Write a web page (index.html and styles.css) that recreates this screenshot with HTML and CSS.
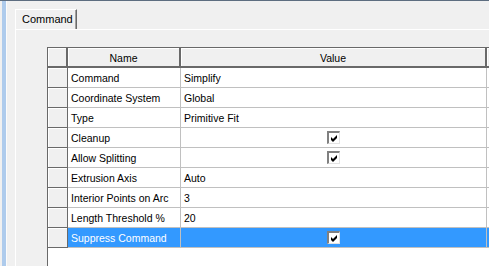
FILE: index.html
```html
<!DOCTYPE html>
<html lang="en">
<head>
    <meta charset="UTF-8">
    <meta name="viewport" content="width=device-width, initial-scale=1.0">
    <title>Command Properties</title>
    <link rel="stylesheet" href="styles.css">
</head>
<body>
    <div class="app">
        <div class="rail">
            <div class="rail-blue"></div>
        </div>
        <div class="tabctl">
            <div class="tabstrip">
                <div class="tab">Command</div>
            </div>
            <div class="panel">
                <table class="grid">
                    <colgroup>
                        <col class="c-head">
                        <col class="c-name">
                        <col class="c-value">
                        <col class="c-more">
                    </colgroup>
                    <thead>
                        <tr>
                            <th class="rh"></th>
                            <th>Name</th>
                            <th>Value</th>
                            <th class="more"></th>
                        </tr>
                    </thead>
                    <tbody>
                        <tr><td class="rh"></td><td>Command</td><td>Simplify</td><td></td></tr>
                        <tr><td class="rh"></td><td>Coordinate System</td><td>Global</td><td></td></tr>
                        <tr><td class="rh"></td><td>Type</td><td>Primitive Fit</td><td></td></tr>
                        <tr><td class="rh"></td><td>Cleanup</td><td class="check"><span class="box"><svg width="7" height="7" viewBox="0 0 7 7"><polygon points="0,2 2,4 6,0 6,3 2,7 0,5" fill="#000"/></svg></span></td><td></td></tr>
                        <tr><td class="rh"></td><td>Allow Splitting</td><td class="check"><span class="box"><svg width="7" height="7" viewBox="0 0 7 7"><polygon points="0,2 2,4 6,0 6,3 2,7 0,5" fill="#000"/></svg></span></td><td></td></tr>
                        <tr><td class="rh"></td><td>Extrusion Axis</td><td>Auto</td><td></td></tr>
                        <tr><td class="rh"></td><td>Interior Points on Arc</td><td>3</td><td></td></tr>
                        <tr><td class="rh"></td><td>Length Threshold %</td><td>20</td><td></td></tr>
                        <tr class="selected"><td class="rh"></td><td>Suppress Command</td><td class="check"><span class="box"><svg width="7" height="7" viewBox="0 0 7 7"><polygon points="0,2 2,4 6,0 6,3 2,7 0,5" fill="#000"/></svg></span></td><td></td></tr>
                    </tbody>
                </table>
                <div class="filler"></div>
            </div>
        </div>
    </div>
</body>
</html>
```

FILE: styles.css
```css
* { box-sizing: border-box; margin: 0; padding: 0; }
body { background: #f0f0f0; font-family: "Liberation Sans", Arial, sans-serif; font-size: 10.5px; color: #000; overflow: hidden; }
.app { display: flex; width: 489px; height: 266px; border-top: 1px solid #5d6d80; overflow: hidden; }

.rail { width: 15px; padding-left: 2px; display: flex; }
.rail-blue { width: 5px; background: #aecbec; border-right: 1px solid #fbfbfb; }

.tabctl { flex: 1; display: flex; flex-direction: column; padding-top: 8px; min-width: 0; }
.tabstrip { display: flex; height: 20px; }
.tab { width: 62px; padding: 3px 0 0 6px; font-size: 11px; border-top: 1px solid #fff; border-left: 1px solid #fff; border-right: 1px solid #696969; box-shadow: inset -1px 0 0 #a0a0a0; background: #f0f0f0; }
.panel { flex: 1; border-top: 1px solid #fff; border-left: 1px solid #fff; padding: 17px 0 0 31px; display: flex; flex-direction: column; min-width: 0; }

.grid { border-collapse: separate; border-spacing: 0; table-layout: fixed; width: 460px; background: #fff; border-top: 1px solid #696969; border-left: 1px solid #696969; }
.c-head { width: 20px; }
.c-name { width: 113px; }
.c-value { width: 306px; }
.c-more { width: 21px; }

.grid th { height: 20px; font-weight: normal; text-align: center; background: #f0f0f0; border-right: 2px solid #696969; border-bottom: 2px solid #696969; box-shadow: inset 1px 1px 0 #fff; padding-top: 1px; }
.grid th.more { border-right: none; }
.grid td { height: 20px; padding: 0 0 0 3px; border-right: 1px solid #c0c0c0; border-bottom: 1px solid #c0c0c0; white-space: nowrap; overflow: hidden; }
.grid td.rh { padding: 0; background: #f0f0f0; border-right: 1px solid #696969; border-bottom: 1px solid #696969; box-shadow: inset 1px 1px 0 #fff; }
.grid td.check { text-align: center; padding: 0; }

.box { display: inline-flex; align-items: center; justify-content: center; width: 13px; height: 13px; vertical-align: middle; background: #fff; border-top: 2px solid #808080; border-left: 2px solid #808080; border-right: 1px solid #e3e3e3; border-bottom: 1px solid #e3e3e3; }
.box svg { display: block; }

.selected td { background: #3399ff; color: #fff; }
.selected td.rh { background: #f0f0f0; }

.filler { flex: 1; background: #fff; border-left: 1px solid #696969; }
```
